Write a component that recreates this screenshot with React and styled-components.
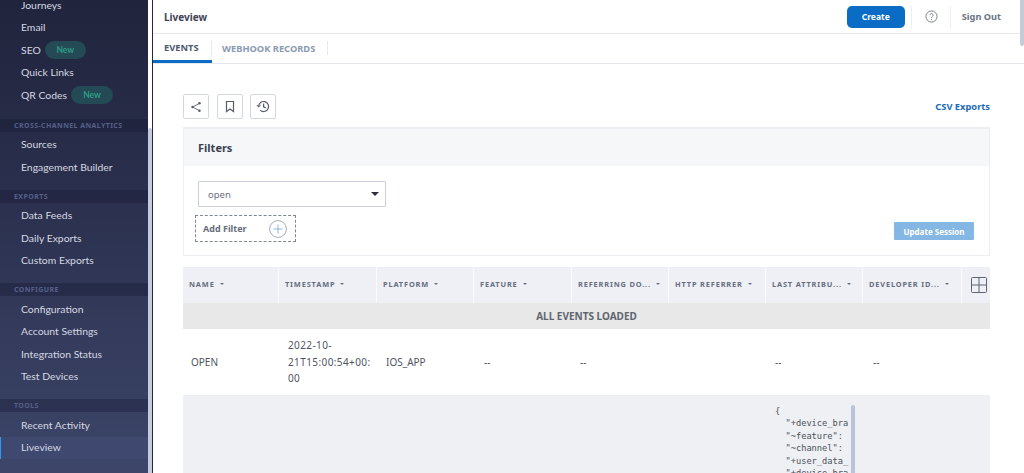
import React from "react";
import styled, { createGlobalStyle } from "styled-components";

const GlobalStyle = createGlobalStyle`
    html, body {
        margin: 0;
        padding: 0;
        background: #fff;
    }
    body {
        font-family: "Noto Sans", "Open Sans", sans-serif;
    }
`;

const Page = styled.div`
    display: flex;
    width: 1024px;
    height: 473px;
    overflow: hidden;
    position: relative;
`;

// sidebar
const Sidebar = styled.div`
    width: 148px;
    flex: none;
    height: 473px;
    overflow: hidden;
    background: linear-gradient(180deg, #20243c 0%, #2a2f4d 40%, #3d4669 100%);
`;
const SideList = styled.div`
    display: flex;
    flex-direction: column;
    margin-top: -6px;
`;
const SideItem = styled.div`
    height: 22.5px;
    box-sizing: border-box;
    padding-bottom: 1px;
    display: flex;
    align-items: center;
    gap: 4px;
    padding-left: 21px;
    font-family: "Lato", "Noto Sans", sans-serif;
    font-size: 10.4px;
    color: #d5d8e2;
    white-space: nowrap;
    ${(p) =>
        p.$active &&
        `
        background: #3f4970;
        box-shadow: inset 1px 0 0 #2d9cf0;
    `}
`;
const NewBadge = styled.span`
    display: inline-flex;
    align-items: center;
    justify-content: center;
    width: ${(p) => p.$w}px;
    height: 18px;
    border-radius: 9px;
    background: #234a55;
    color: #2f9c88;
    font-size: 8.5px;
    font-weight: 700;
`;
const SideHeading = styled.div`
    height: 13px;
    margin: ${(p) => p.$top}px 0 2px;
    display: flex;
    align-items: center;
    padding-left: 14px;
    background: rgba(20, 24, 48, 0.35);
    color: #56608a;
    font-size: 7px;
    font-weight: 700;
    letter-spacing: 0.42px;
`;
const SideScroll = styled.div`
    width: 4px;
    flex: none;
    margin-top: 128px;
    background: #c3cbdc;
    border-radius: 2px 2px 0 0;
`;
const SideGutter = styled.div`
    width: 1px;
    flex: none;
    background: #23263e;
`;

// top bar
const Main = styled.div`
    flex: 1;
    min-width: 0;
    display: flex;
    flex-direction: column;
`;
const TopBar = styled.div`
    height: 33px;
    display: flex;
    align-items: center;
    padding: 0 23px 0 11px;
    border-bottom: 1px solid #e6e8ee;
`;
const PageTitle = styled.div`
    flex: 1;
    font-size: 10px;
    font-weight: 700;
    color: #3e4456;
`;
const CreateButton = styled.button`
    width: 58px;
    height: 22px;
    border: 0;
    border-radius: 5px;
    background: #0a6cc4;
    color: #fff;
    font-family: inherit;
    font-size: 8.5px;
    font-weight: 700;
`;
const TopDivider = styled.div`
    width: 1px;
    height: 22px;
    background: #eceef2;
    margin: ${(p) => p.$m};
`;
const HelpIcon = styled.svg`
    width: 13px;
    height: 13px;
    color: #6f7785;
`;
const SignOut = styled.div`
    font-size: 9.2px;
    font-weight: 700;
    color: #6a7383;
`;

// tabs
const Tabs = styled.div`
    height: 29px;
    display: flex;
    border-bottom: 1px solid #e6e8ee;
`;
const Tab = styled.div`
    height: 29px;
    box-sizing: border-box;
    width: ${(p) => p.$w}px;
    display: flex;
    align-items: center;
    padding-left: ${(p) => p.$pad}px;
    font-size: 9.3px;
    font-weight: 700;
    color: ${(p) => (p.$active ? "#4f5a70" : "#8a9ab2")};
    border-bottom: ${(p) => (p.$active ? "3px solid #0a6cc4" : "0")};
    position: relative;
    &::after {
        content: "";
        position: absolute;
        right: 0;
        top: 7px;
        height: 14px;
        width: 1px;
        background: #e6e8ee;
    }
`;

// content
const Content = styled.div`
    padding: 30px 34px 0 30px;
    display: flex;
    flex-direction: column;
`;
const Toolbar = styled.div`
    height: 26px;
    display: flex;
    align-items: flex-start;
    gap: 7.5px;
    margin-bottom: 7px;
`;
const IconButton = styled.div`
    width: 26px;
    height: 25px;
    box-sizing: border-box;
    border: 1px solid #d3d8e0;
    border-radius: 2px;
    display: flex;
    align-items: center;
    justify-content: center;
    color: #555c6a;
`;
const CsvLink = styled.div`
    margin-left: auto;
    margin-top: 6px;
    font-size: 9.3px;
    font-weight: 700;
    color: #1b6bb8;
`;
const FilterPanel = styled.div`
    height: 129px;
    box-sizing: border-box;
    border: 1px solid #eceef3;
    border-top-width: 2px;
    display: flex;
    flex-direction: column;
`;
const FilterHead = styled.div`
    height: 37px;
    flex: none;
    box-sizing: border-box;
    background: #f6f7f9;
    padding-left: 14px;
    display: flex;
    align-items: center;
    font-size: 11px;
    font-weight: 700;
    color: #3a4050;
`;
const FilterBody = styled.div`
    flex: 1;
    padding: 15px 15px 0 11px;
    position: relative;
`;
const SelectBox = styled.div`
    margin-left: 3px;
    width: 188px;
    height: 26px;
    box-sizing: border-box;
    border: 1px solid #c9d0dc;
    border-radius: 1px;
    display: flex;
    align-items: center;
    justify-content: space-between;
    padding: 0 6px 0 9px;
    font-size: 9.5px;
    color: #6b7280;
`;
const Caret = styled.span`
    width: 0;
    height: 0;
    border-left: ${(p) => p.$s}px solid transparent;
    border-right: ${(p) => p.$s}px solid transparent;
    border-top: ${(p) => p.$s}px solid ${(p) => p.$c};
    flex: none;
`;
const AddFilter = styled.div`
    margin-top: 8px;
    width: 101px;
    height: 27px;
    box-sizing: border-box;
    border: 1px dashed #7f8794;
    display: flex;
    align-items: center;
    justify-content: space-between;
    padding: 0 8px 0 7px;
    font-size: 9px;
    font-weight: 700;
    color: #666d7b;
`;
const UpdateButton = styled.div`
    position: absolute;
    right: 15px;
    bottom: 15px;
    width: 80px;
    height: 18px;
    border-radius: 1px;
    background: #85b7e4;
    color: #fff;
    font-size: 8px;
    font-weight: 700;
    display: flex;
    align-items: center;
    justify-content: center;
`;

// table
const tableCols = "96px 98px 97px 98px 97px 97px 97px 99px 28px";

const TableHead = styled.div`
    margin-top: 11px;
    height: 36px;
    display: grid;
    grid-template-columns: ${tableCols};
    background: #eff0f5;
`;
const HeadCell = styled.div`
    display: flex;
    align-items: center;
    gap: 5px;
    padding: 0 0 2px 6px;
    font-size: 7.4px;
    font-weight: 700;
    letter-spacing: 0.85px;
    color: #666d80;
    white-space: nowrap;
    border-right: 1px solid #fafafc;
`;
const GridCell = styled.div`
    display: flex;
    align-items: center;
    justify-content: flex-end;
    padding-right: 3px;
    color: #5d6572;
`;
const LoadedRow = styled.div`
    height: 26px;
    background: #e8e8e8;
    display: flex;
    align-items: center;
    justify-content: center;
    font-size: 10px;
    font-weight: 700;
    color: #5f6570;
`;
const DataRow = styled.div`
    height: 66px;
    display: grid;
    grid-template-columns: ${tableCols};
    align-items: center;
`;
const DataCell = styled.div`
    padding-left: ${(p) => p.$pad}px;
    font-size: 10px;
    line-height: 16.5px;
    letter-spacing: ${(p) => p.$track || 0}px;
    color: #4f5562;
    white-space: nowrap;
`;
const DetailRow = styled.div`
    height: 78px;
    background: #eff0f3;
    display: grid;
    grid-template-columns: ${tableCols};
`;
const JsonCell = styled.div`
    grid-column: 7;
    position: relative;
    overflow: hidden;
    margin: 10px 8px 0 9px;
`;
const JsonText = styled.pre`
    margin: 0;
    font-family: "DejaVu Sans Mono", monospace;
    font-size: 8.7px;
    line-height: 12.4px;
    color: #4a505c;
`;
const JsonScroll = styled.div`
    position: absolute;
    right: 0;
    top: 0;
    bottom: 0;
    width: 4px;
    border-radius: 2px 2px 0 0;
    background: #b9c5d6;
`;
const PageScroll = styled.div`
    position: absolute;
    right: 0;
    top: 0;
    width: 4px;
    height: 46px;
    background: #c6ccd6;
    border-radius: 0 0 2px 2px;
`;

const columns = [
    "NAME",
    "TIMESTAMP",
    "PLATFORM",
    "FEATURE",
    "REFERRING DO...",
    "HTTP REFERRER",
    "LAST ATTRIBU...",
    "DEVELOPER ID...",
];

const json = `{
  "+device_bra
  "~feature":
  "~channel":
  "+user_data_
  "+device_bra`;

function App() {
    return (
        <Page>
            <GlobalStyle />
            <Sidebar>
                <SideList>
                    <SideItem>Journeys</SideItem>
                    <SideItem>Email</SideItem>
                    <SideItem>
                        SEO <NewBadge $w={41}>New</NewBadge>
                    </SideItem>
                    <SideItem>Quick Links</SideItem>
                    <SideItem>
                        QR Codes <NewBadge $w={42}>New</NewBadge>
                    </SideItem>
                    <SideHeading $top={12}>CROSS-CHANNEL ANALYTICS</SideHeading>
                    <SideItem>Sources</SideItem>
                    <SideItem>Engagement Builder</SideItem>
                    <SideHeading $top={11}>EXPORTS</SideHeading>
                    <SideItem>Data Feeds</SideItem>
                    <SideItem>Daily Exports</SideItem>
                    <SideItem>Custom Exports</SideItem>
                    <SideHeading $top={11}>CONFIGURE</SideHeading>
                    <SideItem>Configuration</SideItem>
                    <SideItem>Account Settings</SideItem>
                    <SideItem>Integration Status</SideItem>
                    <SideItem>Test Devices</SideItem>
                    <SideHeading $top={11}>TOOLS</SideHeading>
                    <SideItem>Recent Activity</SideItem>
                    <SideItem $active>Liveview</SideItem>
                </SideList>
            </Sidebar>
            <SideScroll />
            <SideGutter />
            <Main>
                <TopBar>
                    <PageTitle>Liveview</PageTitle>
                    <CreateButton>Create</CreateButton>
                    <TopDivider $m="0 13px 0 6px" />
                    <HelpIcon viewBox="0 0 14 14" fill="none" stroke="currentColor">
                        <circle cx="7" cy="7" r="6" strokeWidth="1" />
                        <path d="M5.3 5.6a1.7 1.7 0 1 1 2.6 1.4c-.6.4-.9.7-.9 1.4" strokeWidth="1" />
                        <circle cx="7" cy="10.2" r="0.6" fill="currentColor" stroke="none" />
                    </HelpIcon>
                    <TopDivider $m="0 11px 0 12px" />
                    <SignOut>Sign Out</SignOut>
                </TopBar>
                <Tabs>
                    <Tab $active $w={59} $pad={11}>EVENTS</Tab>
                    <Tab $w={116} $pad={10}>WEBHOOK RECORDS</Tab>
                </Tabs>
                <Content>
                    <Toolbar>
                        <IconButton>
                            <svg width="12" height="12" viewBox="0 0 12 12" fill="currentColor" stroke="currentColor">
                                <circle cx="9.5" cy="2.3" r="1.2" stroke="none" />
                                <circle cx="2.5" cy="6" r="1.2" stroke="none" />
                                <circle cx="9.5" cy="9.7" r="1.2" stroke="none" />
                                <path d="M9.5 2.3 2.5 6l7 3.7" fill="none" strokeWidth="0.9" />
                            </svg>
                        </IconButton>
                        <IconButton>
                            <svg width="12" height="13" viewBox="0 0 12 13" fill="none" stroke="currentColor" strokeWidth="1.2">
                                <path d="M2.5 1.5h7v10L6 9l-3.5 2.5z" />
                            </svg>
                        </IconButton>
                        <IconButton>
                            <svg width="14" height="13" viewBox="0 0 14 13" fill="none" stroke="currentColor" strokeWidth="1.2">
                                <path d="M2.6 6.5a5 5 0 1 1 1.5 3.6" />
                                <path d="M.8 5l1.8 2L4.6 5.2" strokeWidth="1" />
                                <path d="M7.6 3.6v3.2l2.2 1.2" />
                            </svg>
                        </IconButton>
                        <CsvLink>CSV Exports</CsvLink>
                    </Toolbar>
                    <FilterPanel>
                        <FilterHead>Filters</FilterHead>
                        <FilterBody>
                            <SelectBox>
                                open
                                <Caret $s={4} $c="#2b2f38" />
                            </SelectBox>
                            <AddFilter>
                                Add Filter
                                <svg width="18" height="18" viewBox="0 0 18 18" fill="none">
                                    <circle cx="9" cy="9" r="8.4" stroke="#8d95a3" strokeWidth="0.8" />
                                    <path d="M9 4.5v9M4.5 9h9" stroke="#8fb6dc" strokeWidth="1" />
                                </svg>
                            </AddFilter>
                            <UpdateButton>Update Session</UpdateButton>
                        </FilterBody>
                    </FilterPanel>
                    <TableHead>
                        {columns.map((c) => (
                            <HeadCell key={c}>
                                {c}
                                <Caret $s={2.5} $c="#666d80" />
                            </HeadCell>
                        ))}
                        <GridCell>
                            <svg width="16" height="16" viewBox="0 0 16 16" fill="none" stroke="currentColor" strokeWidth="1">
                                <rect x="0.5" y="0.5" width="15" height="15" rx="1" />
                                <path d="M8 .5v15M.5 8h15" />
                            </svg>
                        </GridCell>
                    </TableHead>
                    <LoadedRow>ALL EVENTS LOADED</LoadedRow>
                    <DataRow>
                        <DataCell $pad={8}>OPEN</DataCell>
                        <DataCell $pad={9} $track={0.4}>
                            2022-10-
                            <br />
                            21T15:00:54+00:
                            <br />
                            00
                        </DataCell>
                        <DataCell $pad={9}>IOS_APP</DataCell>
                        <DataCell $pad={10}>--</DataCell>
                        <DataCell $pad={8}>--</DataCell>
                        <DataCell $pad={0} />
                        <DataCell $pad={9}>--</DataCell>
                        <DataCell $pad={10}>--</DataCell>
                    </DataRow>
                    <DetailRow>
                        <JsonCell>
                            <JsonText>{json}</JsonText>
                            <JsonScroll />
                        </JsonCell>
                    </DetailRow>
                </Content>
            </Main>
            <PageScroll />
        </Page>
    );
}

export default App;
